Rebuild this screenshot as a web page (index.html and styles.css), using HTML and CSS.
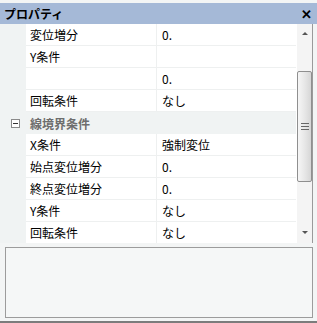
FILE: index.html
```html
<!DOCTYPE html>
<html lang="ja">
<head>
    <meta charset="UTF-8">
    <title>プロパティ</title>
    <link rel="stylesheet" href="styles.css">
</head>
<body>
    <div class="panel">
        <div class="title">
            <span>プロパティ</span>
            <span class="close">✕</span>
        </div>
        <div class="grid">
            <ul class="rows">
                <li><span class="name">変位増分</span><span class="value">0.</span></li>
                <li><span class="name">Y条件</span><span class="value"></span></li>
                <li><span class="name"></span><span class="value">0.</span></li>
                <li><span class="name">回転条件</span><span class="value">なし</span></li>
                <li class="category"><span class="toggle"></span><span class="cat-name">線境界条件</span></li>
                <li><span class="name">X条件</span><span class="value">強制変位</span></li>
                <li><span class="name">始点変位増分</span><span class="value">0.</span></li>
                <li><span class="name">終点変位増分</span><span class="value">0.</span></li>
                <li><span class="name">Y条件</span><span class="value">なし</span></li>
                <li><span class="name">回転条件</span><span class="value">なし</span></li>
            </ul>
            <div class="scroll">
                <span class="arrow up"></span>
                <div class="track">
                    <div class="thumb"><span class="grip"></span></div>
                </div>
                <span class="arrow down"></span>
            </div>
        </div>
        <div class="desc"></div>
    </div>
</body>
</html>
```

FILE: styles.css
```css
*{
    margin: 0;
    padding: 0;
    box-sizing: border-box;
}
body{
    font-family: "Noto Sans CJK JP", "Liberation Sans", sans-serif;
    font-size: 12px;
    color: #000;
    background: #fff;
}
.panel{
    width: 317px;
    height: 323px;
    padding-top: 3px;
    background: #f3f5f5;
    border-bottom: 2px solid #7c7c7c;
    display: flex;
    flex-direction: column;
}
.title{
    height: 21px;
    background: #a5b9d7;
    display: flex;
    align-items: center;
    justify-content: space-between;
    padding: 0 5px 0 4px;
    font-weight: bold;
    line-height: 21px;
}
.close{
    font-size: 13px;
    font-weight: bold;
}
.grid{
    height: 219px;
    display: flex;
    overflow: hidden;
    border-right: 3px solid #f3f5f5;
    margin-right: 1px;
}
.rows{
    flex: 1;
    list-style: none;
    background: #f0f3f3;
}
.rows li{
    height: 22px;
    display: flex;
    align-items: center;
    padding-left: 26px;
}
.name{
    width: 131px;
    height: 100%;
    background: #fff;
    border-right: 1px solid #eef0f0;
    border-bottom: 1px solid #eef0f0;
    padding-left: 4px;
    line-height: 21px;
}
.value{
    flex: 1;
    height: 100%;
    background: #fff;
    border-bottom: 1px solid #eef0f0;
    padding-left: 5px;
    line-height: 21px;
}
.rows .category{
    padding-left: 11px;
    background: #f0f3f3;
}
.toggle{
    width: 9px;
    height: 9px;
    border: 1px solid #8a8a8a;
    background: #fff;
    position: relative;
    margin-right: 10px;
}
.toggle::after{
    position: absolute;
    content: '';
    left: 1px;
    top: 3px;
    width: 5px;
    height: 1px;
    background: #333;
}
.cat-name{
    font-weight: bold;
    color: #6e6e6e;
}
.scroll{
    width: 17px;
    background: #f4f4f4;
    border-left: 1px solid #fff;
    border-right: 1px solid #9a9a9a;
    display: flex;
    flex-direction: column;
    align-items: center;
}
.arrow{
    width: 0;
    height: 0;
    border-left: 3px solid transparent;
    border-right: 3px solid transparent;
    margin: 8px 0;
}
.arrow.up{
    border-bottom: 3px solid #555;
}
.arrow.down{
    border-top: 3px solid #555;
    margin-bottom: 9px;
}
.track{
    flex: 1;
    width: 100%;
    padding-top: 28px;
}
.thumb{
    height: 111px;
    border: 1px solid #8f8f8f;
    border-radius: 2px;
    background: linear-gradient(to right, #f6f6f6, #e4e4e4 60%, #d6d6d6);
    display: flex;
    align-items: center;
    justify-content: center;
}
.grip{
    width: 8px;
    height: 7px;
    border-top: 1px solid #666;
    border-bottom: 1px solid #666;
    position: relative;
}
.grip::after{
    position: absolute;
    content: '';
    left: 0;
    top: 2px;
    width: 8px;
    height: 1px;
    background: #666;
}
.desc{
    margin: 4px 4px 3px 5px;
    flex: 1;
    border: 1px solid #9c9c9c;
    background: #f5f7f7;
}
```
